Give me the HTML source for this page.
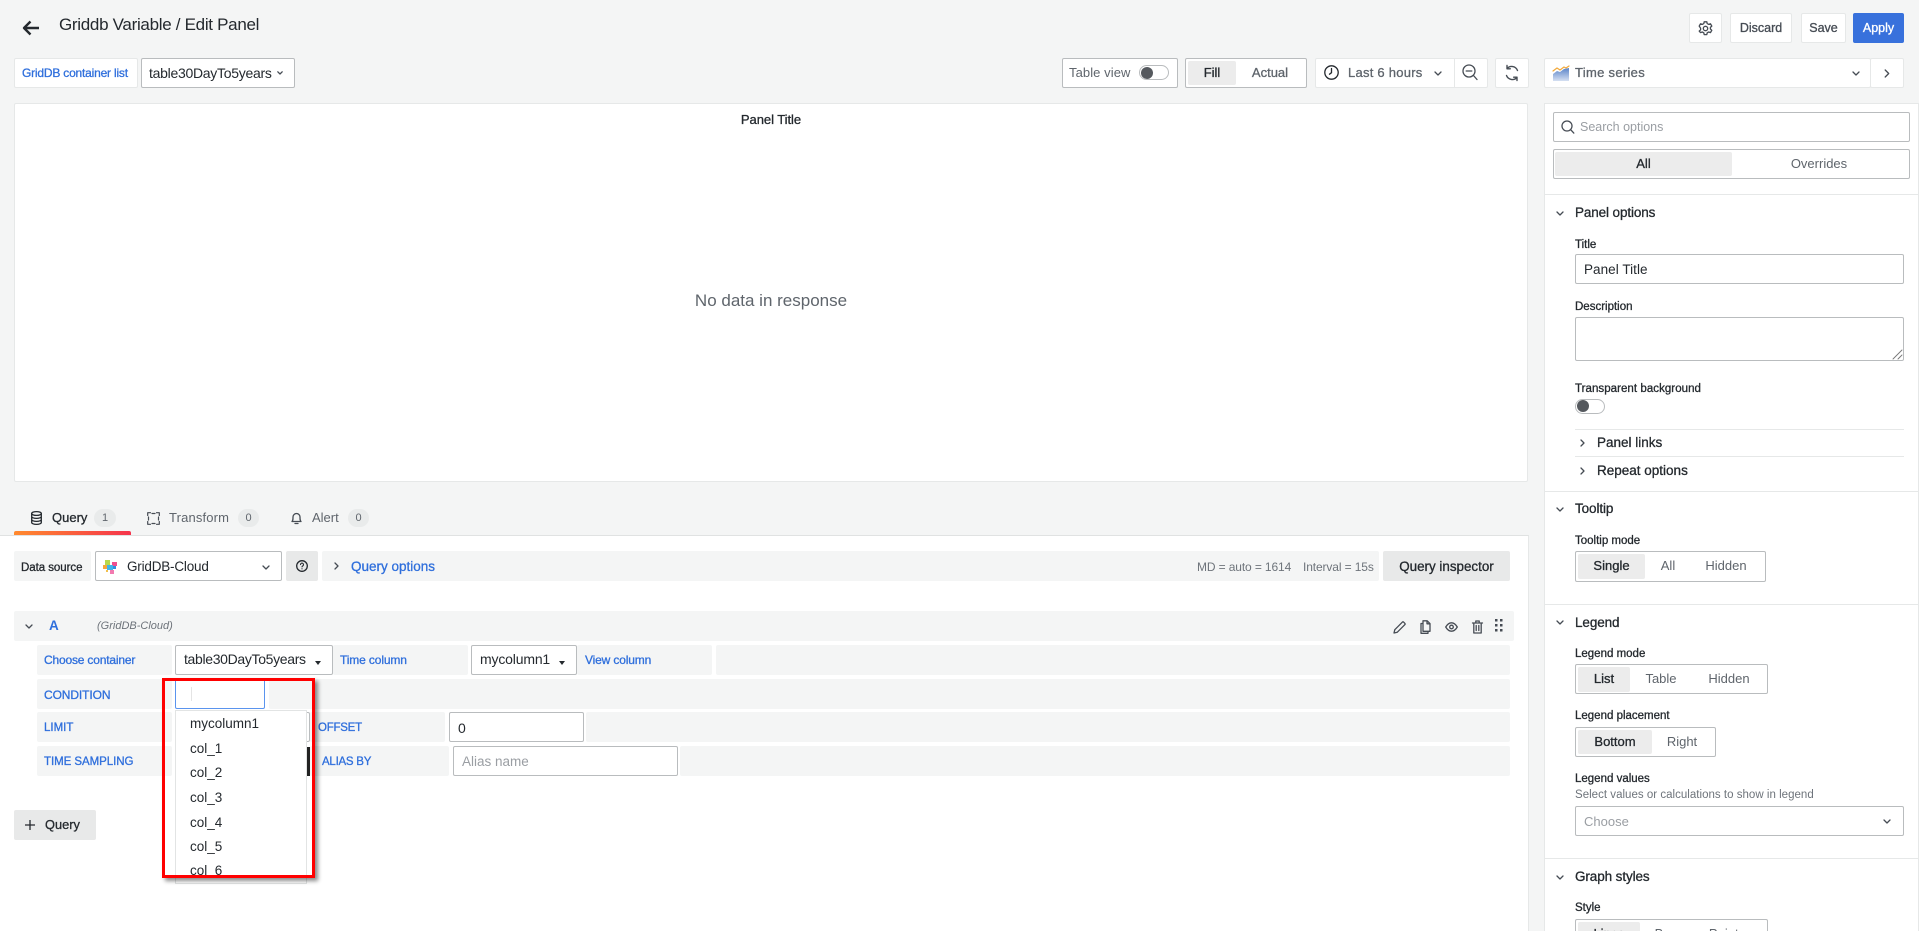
<!DOCTYPE html>
<html lang="en"><head><meta charset="utf-8"><title>Griddb Variable / Edit Panel</title>
<style>
html,body{margin:0;padding:0;width:1919px;height:931px;overflow:hidden;background:#f4f5f5;font-family:"Liberation Sans",sans-serif;color:#24292e}
#root{position:relative;width:1919px;height:931px;overflow:hidden;background:#f4f5f5}
.b{position:absolute;box-sizing:border-box}
.t{position:absolute;white-space:nowrap;height:16px;line-height:16px;font-size:14px;margin-top:1px}
.m{-webkit-text-stroke:.3px currentColor}
.w{background:#fff;border:1px solid #e6e8e8;border-radius:2px}
.i{background:#fff;border:1px solid #b9bcbe;border-radius:2px}
.g{background:#f4f5f5;border-radius:2px}
.a{background:#ececec;border-radius:2px}
.bl{color:#2f6fdc}
.s{color:#5f656c}
.c{text-align:center}
svg{position:absolute;overflow:visible;fill:none;stroke:#464c54;stroke-width:1.3;stroke-linecap:round;stroke-linejoin:round}
.l{position:absolute;height:1px;background:#e6e8e8}
</style></head><body><div id="root">

<!-- top bar -->
<svg style="left:22px;top:20px" width="18" height="16" viewBox="0 0 18 16"><path d="M17 8H2M8.500 1.500 2 8l6.500 6.500" stroke="#24292e" stroke-width="2.400" stroke-linecap="butt"/></svg>
<span class="t" style="left:59px;top:14px;height:20px;line-height:20px;font-size:17px;letter-spacing:-.3px">Griddb Variable / Edit Panel</span>

<div class="b w" style="left:1689px;top:13px;width:33px;height:30px"></div>
<svg style="left:1698px;top:21px" width="15" height="15" viewBox="0 0 15 15"><circle cx="7.500" cy="7.500" r="2.200"/><path d="M6.200 .8h2.600l.4 1.800 1.500.8 1.800-.6 1.300 2.300-1.400 1.300v1.600l1.400 1.300-1.300 2.300-1.800-.6-1.500.8-.4 1.800H6.200l-.4-1.800-1.500-.8-1.800.6L1.200 10.100l1.400-1.300V7.200L1.200 5.100 2.500 2.800l1.800.6 1.500-.8z"/></svg>
<div class="b w" style="left:1730px;top:13px;width:62px;height:30px"></div>
<span class="t m c" style="left:1730px;width:62px;top:19px;font-size:12.500px;color:#464c54">Discard</span>
<div class="b w" style="left:1801px;top:13px;width:45px;height:30px"></div>
<span class="t m c" style="left:1801px;width:45px;top:19px;font-size:12.500px;color:#464c54">Save</span>
<div class="b" style="left:1853px;top:13px;width:51px;height:30px;background:#3871dc;border-radius:2px"></div>
<span class="t m c" style="left:1853px;width:51px;top:19px;font-size:12.500px;color:#fff">Apply</span>

<!-- toolbar -->
<div class="b w" style="left:14px;top:58px;width:124px;height:30px"></div>
<span class="t m bl" style="left:22px;top:64px;font-size:12px;letter-spacing:-.2px">GridDB container list</span>
<div class="b i" style="left:141px;top:58px;width:154px;height:30px"></div>
<span class="t" style="left:149px;top:64px;letter-spacing:-.28px">table30DayTo5years</span>
<svg style="left:277px;top:71px" width="6" height="4" viewBox="0 0 6 4"><path d="m.8.8 2.200 2.200L5.200.8"/></svg>

<div class="b i" style="left:1062px;top:58px;width:116px;height:30px"></div>
<span class="t s" style="left:1069px;top:64px;font-size:13px;letter-spacing:.08px">Table view</span>
<div class="b" style="left:1139px;top:65px;width:30px;height:15px;border:1px solid #b9bcbe;border-radius:8px;background:#fff"></div>
<div class="b" style="left:1141px;top:67px;width:12px;height:12px;border-radius:50%;background:#55595e"></div>

<div class="b i" style="left:1185px;top:58px;width:122px;height:30px"></div>
<div class="b a" style="left:1188px;top:61px;width:48px;height:24px"></div>
<span class="t m c" style="left:1188px;width:48px;top:64px;font-size:13px">Fill</span>
<span class="t m c s" style="left:1236px;width:68px;top:64px;font-size:13px">Actual</span>

<div class="b w" style="left:1315px;top:58px;width:173px;height:30px"></div>
<div class="b" style="left:1454px;top:59px;width:1px;height:28px;background:#e6e8e8"></div>
<svg style="left:1324px;top:65px" width="15" height="15" viewBox="0 0 15 15"><circle cx="7.500" cy="7.500" r="6.700" stroke="#24292e"/><path d="M7.500 3.500v4.200L5.500 9.200" stroke="#24292e"/></svg>
<span class="t m s" style="left:1348px;top:64px;font-size:13px;letter-spacing:.25px">Last 6 hours</span>
<svg style="left:1434px;top:71px" width="8" height="5" viewBox="0 0 8 5"><path d="m1 1 3 3 3-3"/></svg>
<svg style="left:1462px;top:64px" width="16" height="17" viewBox="0 0 16 17"><circle cx="7" cy="7" r="6"/><path d="M4.200 7h5.600M11.500 11.500 15 15.500"/></svg>
<div class="b w" style="left:1495px;top:58px;width:34px;height:30px"></div>
<svg style="left:1504px;top:65px" width="16" height="16" viewBox="0 0 16 16"><path d="M13.500 5.500A6.300 6.300 0 0 0 3 3.500M2.500 10.500A6.300 6.300 0 0 0 13 12.500M3 .5v3.300h3.300M13 15.500v-3.300H9.700" stroke-width="1.400"/></svg>

<div class="b w" style="left:1544px;top:58px;width:327px;height:30px"></div>
<div class="b w" style="left:1870px;top:58px;width:34px;height:30px"></div>
<svg style="left:1553px;top:66px" width="16" height="15" viewBox="0 0 16 15"><defs><linearGradient id="ts" x1="0" y1="0" x2="0" y2="1"><stop offset="0" stop-color="#5b84c9"/><stop offset="1" stop-color="#d5e0f2"/></linearGradient></defs><path d="M0 8 4 5l3 1 4-3 5-1v13H0z" fill="url(#ts)" stroke="none"/><path d="M0 5 4 2l3 2 4-3 2 1 3-2" stroke="#f2a93b" stroke-width="1.200"/></svg>
<span class="t m s" style="left:1575px;top:64px;font-size:13px;letter-spacing:.3px">Time series</span>
<svg style="left:1852px;top:71px" width="8" height="5" viewBox="0 0 8 5"><path d="m1 1 3 3 3-3"/></svg>
<svg style="left:1884px;top:69px" width="6" height="9" viewBox="0 0 6 9"><path d="m1.200 1 3.500 3.500L1.200 8"/></svg>

<!-- panel -->
<div class="b w" style="left:14px;top:103px;width:1514px;height:379px"></div>
<span class="t m c" style="left:640px;width:262px;top:111px;font-size:13px;letter-spacing:-.05px">Panel Title</span>
<span class="t c" style="left:571px;width:400px;top:290px;height:20px;line-height:20px;font-size:17px;color:#5f656c;letter-spacing:0">No data in response</span>

<!-- tabs -->
<svg style="left:31px;top:511px" width="11" height="14" viewBox="0 0 11 14"><ellipse cx="5.500" cy="2.500" rx="4.800" ry="1.900" stroke="#24292e"/><path d="M.7 2.500v9c0 1 2 1.900 4.800 1.900s4.800-.9 4.800-1.900v-9M.7 5.500c0 1 2 1.900 4.800 1.900s4.800-.9 4.800-1.900M.7 8.500c0 1 2 1.900 4.800 1.900s4.800-.9 4.800-1.900" stroke="#24292e"/></svg>
<span class="t m" style="left:52px;top:509px;font-size:13px">Query</span>
<div class="b" style="left:94px;top:509px;width:22px;height:18px;border-radius:9px;background:#e9ebeb"></div>
<span class="t c s" style="left:94px;width:22px;top:509px;font-size:11px">1</span>
<div class="b" style="left:14px;top:531px;width:117px;height:4px;border-radius:2px 2px 0 0;background:linear-gradient(90deg,#ff8a2e,#f5344c)"></div>
<svg style="left:147px;top:512px" width="13" height="13" viewBox="0 0 13 13"><path d="M.7 3.500V.7h2.800M9.500.7h2.800v2.800M12.300 9.500v2.800H9.500M3.500 12.300H.7V9.500M5 1.500h3M11.500 5v3M8 11.500H5M1.500 8V5" stroke-width="1.200"/></svg>
<span class="t s" style="left:169px;top:509px;font-size:13px;letter-spacing:.15px">Transform</span>
<div class="b" style="left:238px;top:509px;width:21px;height:18px;border-radius:9px;background:#e9ebeb"></div>
<span class="t c s" style="left:238px;width:21px;top:509px;font-size:11px">0</span>
<svg style="left:291px;top:511px" width="11" height="14" viewBox="0 0 11 14"><path d="M1 10.500c1-1 1-2 1-4.500a3.500 3.500 0 0 1 7 0c0 2.500 0 3.500 1 4.500zM4 12.500h3"/></svg>
<span class="t s" style="left:312px;top:509px;font-size:13px">Alert</span>
<div class="b" style="left:348px;top:509px;width:21px;height:18px;border-radius:9px;background:#e9ebeb"></div>
<span class="t c s" style="left:348px;width:21px;top:509px;font-size:11px">0</span>

<!-- editor -->
<div class="b" style="left:0;top:535px;width:1529px;height:396px;background:#fff;border-top:1px solid #e0e2e2;border-right:1px solid #e6e8e8"></div>

<div class="b g" style="left:14px;top:551px;width:77px;height:30px"></div>
<span class="t m" style="left:21px;top:559px;font-size:11.500px;letter-spacing:-.05px">Data source</span>
<div class="b i" style="left:95px;top:551px;width:187px;height:30px"></div>
<svg style="left:103px;top:559px" width="15" height="15" viewBox="0 0 15 15"><g stroke="none"><rect x="2" y="1" width="5" height="5" fill="#b7d84b"/><rect x="9" y="3" width="5" height="4" fill="#ee4f8e"/><rect x="0" y="6" width="4" height="4" fill="#f5a63c"/><rect x="4" y="6" width="6" height="5" fill="#3fb4e8"/><rect x="10" y="7" width="3" height="3" fill="#2f8fe0"/><rect x="7" y="11" width="4" height="4" fill="#f27ab0"/><rect x="3" y="11" width="2" height="2" fill="#f2c14e"/></g></svg>
<span class="t" style="left:127px;top:558px;font-size:13.500px;letter-spacing:-.2px">GridDB-Cloud</span>
<svg style="left:262px;top:565px" width="8" height="5" viewBox="0 0 8 5"><path d="m1 1 3 3 3-3"/></svg>
<div class="b a" style="left:286px;top:551px;width:32px;height:30px;background:#e8e9e9"></div>
<svg style="left:296px;top:560px" width="12" height="12" viewBox="0 0 12 12"><circle cx="6" cy="6" r="5.300" stroke="#24292e"/><path d="M4.500 4.600a1.500 1.500 0 1 1 2.300 1.300c-.5.300-.8.500-.8 1M6 8.700v.2" stroke="#24292e" stroke-width="1.100"/></svg>
<div class="b g" style="left:322px;top:551px;width:1057px;height:30px"></div>
<svg style="left:334px;top:562px" width="5" height="8" viewBox="0 0 5 8"><path d="m1 1 3 3-3 3"/></svg>
<span class="t m bl" style="left:351px;top:558px;font-size:13.500px">Query options</span>
<span class="t s" style="left:1197px;top:558px;font-size:12px;letter-spacing:-.12px;color:#6e747b">MD = auto = 1614</span>
<span class="t s" style="left:1303px;top:558px;font-size:12px;letter-spacing:-.12px;color:#6e747b">Interval = 15s</span>
<div class="b a" style="left:1383px;top:551px;width:127px;height:30px;background:#e8e9e9"></div>
<span class="t m c" style="left:1383px;width:127px;top:558px;font-size:13.400px">Query inspector</span>

<div class="b g" style="left:14px;top:611px;width:1500px;height:30px"></div>
<svg style="left:25px;top:624px" width="8" height="5" viewBox="0 0 8 5"><path d="m1 1 3 3 3-3"/></svg>
<span class="t bl" style="left:49px;top:617px;font-weight:bold;font-size:13.500px">A</span>
<span class="t s" style="left:97px;top:617px;font-size:11px;font-style:italic;color:#6e747b">(GridDB-Cloud)</span>
<svg style="left:1393px;top:621px" width="13" height="13" viewBox="0 0 13 13"><path d="M1 12l.8-3.300L9.300 1.200a1 1 0 0 1 1.400 0l1.100 1.100a1 1 0 0 1 0 1.400L4.300 11.200z"/></svg>
<svg style="left:1420px;top:620px" width="11" height="14" viewBox="0 0 11 14"><path d="M3 3.500H1v9.800h7v-2M3 .8h4.200L10 3.600v7.700H3zM7 .8v3h3"/></svg>
<svg style="left:1445px;top:622px" width="13" height="10" viewBox="0 0 13 10"><path d="M.7 5C2.500 2 4.500.8 6.500.8s4 1.200 5.800 4.200c-1.800 3-3.800 4.200-5.800 4.200S2.500 8 .7 5z"/><circle cx="6.500" cy="5" r="1.800"/></svg>
<svg style="left:1472px;top:620px" width="11" height="14" viewBox="0 0 11 14"><path d="M.5 3h10M3.800 3V1h3.400v2M1.800 3v10h7.400V3M4.200 5.500v5M6.800 5.500v5"/></svg>
<svg style="left:1495px;top:619px" width="7" height="13" viewBox="0 0 7 13"><g fill="#464c54" stroke="none"><rect x="0" y="0" width="2.500" height="2.500"/><rect x="5" y="0" width="2.500" height="2.500"/><rect x="0" y="5" width="2.500" height="2.500"/><rect x="5" y="5" width="2.500" height="2.500"/><rect x="0" y="10" width="2.500" height="2.500"/><rect x="5" y="10" width="2.500" height="2.500"/></g></svg>

<!-- row 1 -->
<div class="b g" style="left:37px;top:645px;width:135px;height:30px"></div>
<span class="t m bl" style="left:44px;top:651px;font-size:12px;letter-spacing:-.18px">Choose container</span>
<div class="b g" style="left:333px;top:645px;width:135px;height:30px"></div>
<span class="t m bl" style="left:340px;top:651px;font-size:12px;letter-spacing:-.13px">Time column</span>
<div class="b i" style="left:175px;top:645px;width:158px;height:30px"></div>
<span class="t" style="left:184px;top:650px;letter-spacing:-.33px">table30DayTo5years</span>
<div class="b" style="left:315px;top:661px;border:3.500px solid transparent;border-top:4px solid #24292e;border-bottom:0"></div>
<div class="b g" style="left:577px;top:645px;width:135px;height:30px"></div>
<div class="b i" style="left:471px;top:645px;width:106px;height:30px"></div>
<span class="t" style="left:480px;top:650px;letter-spacing:-.17px">mycolumn1</span>
<div class="b" style="left:559px;top:661px;border:3.500px solid transparent;border-top:4px solid #24292e;border-bottom:0"></div>
<span class="t m bl" style="left:585px;top:651px;font-size:12px;letter-spacing:-.15px">View column</span>
<div class="b g" style="left:716px;top:645px;width:794px;height:30px"></div>

<!-- row 2 -->
<div class="b g" style="left:37px;top:679px;width:135px;height:30px"></div>
<span class="t m bl" style="left:44px;top:686px;font-size:12px;letter-spacing:-.1px">CONDITION</span>
<div class="b g" style="left:269px;top:679px;width:1241px;height:30px"></div>
<div class="b" style="left:175px;top:679px;width:90px;height:30px;background:#fff;border:1px solid #5a94ee;border-radius:2px"></div>
<div class="b" style="left:191px;top:687px;width:1px;height:14px;background:#e4e4e4"></div>

<!-- row 3 -->
<div class="b g" style="left:37px;top:712px;width:135px;height:30px"></div>
<span class="t m bl" style="left:44px;top:719px;font-size:11.500px">LIMIT</span>
<div class="b i" style="left:175px;top:712px;width:135px;height:30px"></div>
<div class="b g" style="left:310px;top:712px;width:135px;height:30px"></div>
<span class="t m bl" style="left:318px;top:719px;font-size:11.500px;letter-spacing:-.25px">OFFSET</span>
<div class="b i" style="left:449px;top:712px;width:135px;height:30px"></div>
<span class="t" style="left:458px;top:719px">0</span>
<div class="b g" style="left:586px;top:712px;width:924px;height:30px"></div>

<!-- row 4 -->
<div class="b g" style="left:37px;top:746px;width:135px;height:30px"></div>
<span class="t m bl" style="left:44px;top:753px;font-size:11.500px;letter-spacing:-.05px">TIME SAMPLING</span>
<div class="b" style="left:307px;top:747px;width:2.500px;height:29px;background:#222"></div>
<div class="b g" style="left:310px;top:746px;width:139px;height:30px"></div>
<span class="t m bl" style="left:322px;top:753px;font-size:11.500px;letter-spacing:-.25px">ALIAS BY</span>
<div class="b i" style="left:453px;top:746px;width:225px;height:30px"></div>
<span class="t" style="left:462px;top:753px;font-size:13.500px;color:#9a9ea3">Alias name</span>
<div class="b g" style="left:680px;top:746px;width:830px;height:30px"></div>

<!-- add query -->
<div class="b" style="left:14px;top:810px;width:82px;height:30px;background:#e8e9e9;border-radius:2px"></div>
<svg style="left:25px;top:820px" width="10" height="10" viewBox="0 0 10 10"><path d="M5 0v10M0 5h10" stroke="#24292e" stroke-linecap="butt"/></svg>
<span class="t m" style="left:45px;top:816px;font-size:12.800px">Query</span>

<!-- dropdown -->
<div class="b" style="left:175px;top:710px;width:132px;height:174px;background:#fff;border:1px solid #e2e4e4"></div>
<span class="t" style="left:190px;top:715px;font-size:13.500px">mycolumn1</span>
<span class="t" style="left:190px;top:740px;font-size:13.500px">col_1</span>
<span class="t" style="left:190px;top:764px;font-size:13.500px">col_2</span>
<span class="t" style="left:190px;top:789px;font-size:13.500px">col_3</span>
<span class="t" style="left:190px;top:814px;font-size:13.500px">col_4</span>
<span class="t" style="left:190px;top:838px;font-size:13.500px">col_5</span>
<span class="t" style="left:190px;top:862px;font-size:13.500px">col_6</span>

<!-- red highlight -->
<div class="b" style="left:162px;top:678px;width:153px;height:200px;border:3.500px solid #f00;box-shadow:3px 3px 4px rgba(0,0,0,.45)"></div>

<!-- right options -->
<div class="b" style="left:1544px;top:103px;width:375px;height:828px;background:#fff;border:1px solid #e6e8e8;border-bottom:0"></div>
<div class="b i" style="left:1553px;top:112px;width:357px;height:30px"></div>
<svg style="left:1561px;top:120px" width="14" height="14" viewBox="0 0 14 14"><circle cx="6" cy="6" r="5"/><path d="m9.800 9.800 3 3.300"/></svg>
<span class="t" style="left:1580px;top:118px;font-size:12.500px;color:#9a9ea3">Search options</span>
<div class="b i" style="left:1553px;top:149px;width:357px;height:30px"></div>
<div class="b a" style="left:1555px;top:152px;width:177px;height:24px"></div>
<span class="t m c" style="left:1555px;width:177px;top:155px;font-size:13px">All</span>
<span class="t c s" style="left:1731px;width:176px;top:155px;font-size:13px">Overrides</span>
<div class="l" style="left:1545px;top:194px;width:374px"></div>

<svg style="left:1556px;top:211px" width="8" height="5" viewBox="0 0 8 5"><path d="m1 1 3 3 3-3"/></svg>
<span class="t m" style="left:1575px;top:204px;font-size:13.500px;letter-spacing:-.12px">Panel options</span>
<span class="t m" style="left:1575px;top:236px;font-size:11.500px">Title</span>
<div class="b i" style="left:1575px;top:254px;width:329px;height:30px"></div>
<span class="t" style="left:1584px;top:261px;font-size:13.500px;letter-spacing:.05px">Panel Title</span>
<span class="t m" style="left:1575px;top:298px;font-size:11.500px">Description</span>
<div class="b i" style="left:1575px;top:317px;width:329px;height:44px"></div>
<svg style="left:1892px;top:349px" width="11" height="11" viewBox="0 0 11 11"><path d="M1 10 10 1M6 10l4-4" stroke="#777" stroke-width=".9"/></svg>
<span class="t m" style="left:1575px;top:380px;font-size:11.500px;letter-spacing:.05px">Transparent background</span>
<div class="b" style="left:1575px;top:399px;width:30px;height:15px;border:1px solid #b9bcbe;border-radius:8px;background:#fff"></div>
<div class="b" style="left:1577px;top:400px;width:12px;height:12px;border-radius:50%;background:#55595e"></div>
<div class="l" style="left:1575px;top:429px;width:329px"></div>
<svg style="left:1580px;top:439px" width="5" height="8" viewBox="0 0 5 8"><path d="m1 1 3 3-3 3"/></svg>
<span class="t m" style="left:1597px;top:434px;font-size:13.500px">Panel links</span>
<div class="l" style="left:1575px;top:456px;width:329px"></div>
<svg style="left:1580px;top:467px" width="5" height="8" viewBox="0 0 5 8"><path d="m1 1 3 3-3 3"/></svg>
<span class="t m" style="left:1597px;top:462px;font-size:13.500px">Repeat options</span>
<div class="l" style="left:1545px;top:491px;width:374px"></div>

<svg style="left:1556px;top:507px" width="8" height="5" viewBox="0 0 8 5"><path d="m1 1 3 3 3-3"/></svg>
<span class="t m" style="left:1575px;top:500px;font-size:13.500px;letter-spacing:-.1px">Tooltip</span>
<span class="t m" style="left:1575px;top:532px;font-size:11.500px">Tooltip mode</span>
<div class="b i" style="left:1575px;top:551px;width:191px;height:31px"></div>
<div class="b a" style="left:1578px;top:554px;width:67px;height:25px"></div>
<span class="t m c" style="left:1578px;width:67px;top:557px;font-size:13px">Single</span>
<span class="t c s" style="left:1648px;width:40px;top:557px;font-size:13px">All</span>
<span class="t c s" style="left:1696px;width:60px;top:557px;font-size:13px">Hidden</span>
<div class="l" style="left:1545px;top:604px;width:374px"></div>

<svg style="left:1556px;top:620px" width="8" height="5" viewBox="0 0 8 5"><path d="m1 1 3 3 3-3"/></svg>
<span class="t m" style="left:1575px;top:614px;font-size:13.500px;letter-spacing:-.1px">Legend</span>
<span class="t m" style="left:1575px;top:645px;font-size:11.500px">Legend mode</span>
<div class="b i" style="left:1575px;top:664px;width:193px;height:30px"></div>
<div class="b a" style="left:1578px;top:667px;width:52px;height:25px"></div>
<span class="t m c" style="left:1578px;width:52px;top:670px;font-size:13px">List</span>
<span class="t c s" style="left:1636px;width:50px;top:670px;font-size:13px">Table</span>
<span class="t c s" style="left:1699px;width:60px;top:670px;font-size:13px">Hidden</span>
<span class="t m" style="left:1575px;top:707px;font-size:11.500px">Legend placement</span>
<div class="b i" style="left:1575px;top:727px;width:141px;height:30px"></div>
<div class="b a" style="left:1578px;top:730px;width:74px;height:24px"></div>
<span class="t m c" style="left:1578px;width:74px;top:733px;font-size:13px">Bottom</span>
<span class="t c s" style="left:1657px;width:50px;top:733px;font-size:13px">Right</span>
<span class="t m" style="left:1575px;top:770px;font-size:11.500px">Legend values</span>
<span class="t s" style="left:1575px;top:786px;font-size:11.500px;letter-spacing:.02px;color:#6e747b">Select values or calculations to show in legend</span>
<div class="b i" style="left:1575px;top:806px;width:329px;height:30px"></div>
<span class="t" style="left:1584px;top:813px;font-size:13px;color:#9a9ea3">Choose</span>
<svg style="left:1883px;top:819px" width="8" height="5" viewBox="0 0 8 5"><path d="m1 1 3 3 3-3"/></svg>
<div class="l" style="left:1545px;top:858px;width:374px"></div>

<svg style="left:1556px;top:875px" width="8" height="5" viewBox="0 0 8 5"><path d="m1 1 3 3 3-3"/></svg>
<span class="t m" style="left:1575px;top:868px;font-size:13.500px;letter-spacing:-.1px">Graph styles</span>
<span class="t m" style="left:1575px;top:899px;font-size:11.500px">Style</span>
<div class="b i" style="left:1575px;top:919px;width:193px;height:30px"></div>
<div class="b a" style="left:1578px;top:922px;width:62px;height:25px"></div>
<span class="t m c" style="left:1578px;width:62px;top:925px;font-size:13px">Lines</span>
<span class="t c s" style="left:1643px;width:50px;top:925px;font-size:13px">Bars</span>
<span class="t c s" style="left:1697px;width:60px;top:925px;font-size:13px">Points</span>
</div></body></html>
